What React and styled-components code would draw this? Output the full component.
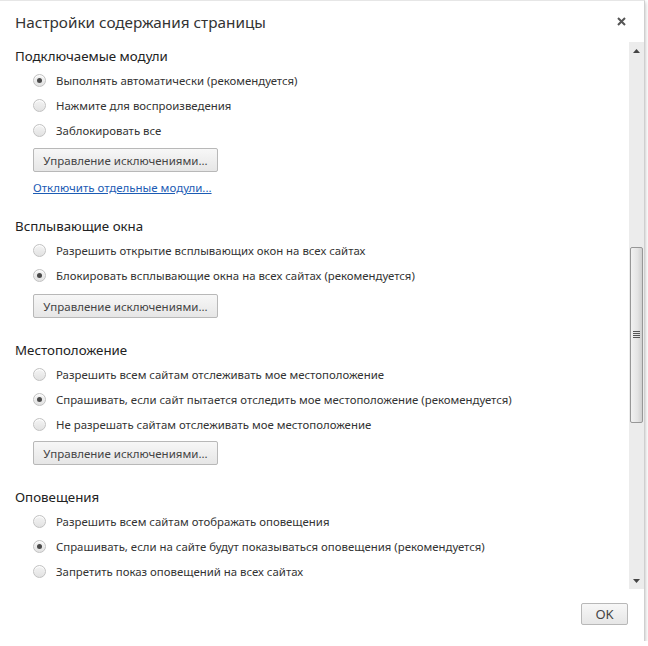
import React from 'react';
import styled, { createGlobalStyle } from 'styled-components';

const GlobalStyle = createGlobalStyle`
  html, body {
    margin: 0;
    padding: 0;
    background: #fff;
  }
  body {
    font-family: "Noto Sans", "Liberation Sans", sans-serif;
    color: #333;
  }
`;

const Dialog = styled.div`
  width: 644px;
  height: 640px;
  background: #fff;
  border-top: 1px solid #e6e6e6;
  border-right: 1px solid #cfcfcf;
  box-shadow: 0 2px 4px rgba(0, 0, 0, 0.3);
  display: flex;
  flex-direction: column;
`;

const Header = styled.div`
  height: 41px;
  display: flex;
  align-items: center;
  justify-content: space-between;
  padding: 0 15px;
`;

const Title = styled.h1`
  margin: 0;
  font-size: 15.3px;
  font-weight: normal;
  color: #333;
`;

const CloseButton = styled.button`
  border: 0;
  background: none;
  padding: 0;
  width: 16px;
  height: 16px;
  display: flex;
  align-items: center;
  justify-content: center;
  cursor: pointer;
`;

const Body = styled.div`
  height: 547px;
  display: flex;
`;

const Content = styled.div`
  flex: 1;
  overflow: hidden;
  padding: 3px 0 0 15px;
`;

const Section = styled.section`
  margin-bottom: ${props => props.gap}px;
`;

const Heading = styled.h2`
  margin: 0;
  height: 23px;
  line-height: 23px;
  font-size: 13.3px;
  font-weight: normal;
  color: #222;
`;

const Options = styled.div`
  padding-left: 18px;
`;

const OptionRow = styled.label`
  height: 25px;
  display: flex;
  align-items: center;
  gap: 10px;
  font-size: 11.4px;
  color: #333;
  white-space: nowrap;
`;

const Radio = styled.span`
  width: 13px;
  height: 13px;
  flex: none;
  box-sizing: border-box;
  border-radius: 50%;
  border: 1px solid #c2c2c2;
  background: linear-gradient(#f4f4f4, #e2e2e2);
  box-shadow: inset 0 1px 1px #fff;
  display: flex;
  align-items: center;
  justify-content: center;

  &::after {
    content: '';
    width: 5px;
    height: 5px;
    border-radius: 50%;
    background: ${props => (props.checked ? '#4a4a4a' : 'transparent')};
  }
`;

const Button = styled.button`
  margin-top: ${props => props.offset}px;
  width: 185px;
  height: 24px;
  padding: 0;
  border: 1px solid #b8b8b8;
  border-radius: 2px;
  background: linear-gradient(#f7f7f7, #e6e6e6);
  font-family: inherit;
  font-size: 11.5px;
  color: #444;
  white-space: nowrap;
  display: block;
`;

const Link = styled.a`
  display: block;
  margin-top: 8px;
  height: 16px;
  line-height: 16px;
  font-size: 11.5px;
  color: #1c5cb4;
  text-decoration: underline;
`;

const Scrollbar = styled.div`
  width: 15px;
  background: #ececec;
  display: flex;
  flex-direction: column;
`;

const Arrow = styled.div`
  height: 17px;
  display: flex;
  align-items: center;
  justify-content: center;
`;

const Track = styled.div`
  flex: ${props => props.size};
`;

const Thumb = styled.div`
  height: 176px;
  box-sizing: border-box;
  margin: 0 1px;
  border: 1px solid #979797;
  border-radius: 2px;
  background: linear-gradient(90deg, #f2f2f2, #e4e4e4 60%, #cfcfcf);
  display: flex;
  align-items: center;
  justify-content: center;
`;

const Footer = styled.div`
  flex: 1;
  display: flex;
  justify-content: flex-end;
  align-items: flex-start;
  padding: 14px 16px 0 0;
`;

const OkButton = styled.button`
  width: 47px;
  height: 22px;
  padding: 0;
  border: 1px solid #b8b8b8;
  border-radius: 2px;
  background: linear-gradient(#f7f7f7, #e6e6e6);
  font-family: inherit;
  font-size: 13px;
  color: #444;
`;

const sections = [
  {
    title: 'Подключаемые модули',
    options: ['Выполнять автоматически (рекомендуется)', 'Нажмите для воспроизведения', 'Заблокировать все'],
    checked: 0,
    buttonOffset: 5,
    link: 'Отключить отдельные модули...',
    gap: 19,
  },
  {
    title: 'Всплывающие окна',
    options: ['Разрешить открытие всплывающих окон на всех сайтах', 'Блокировать всплывающие окна на всех сайтах (рекомендуется)'],
    checked: 1,
    buttonOffset: 6,
    gap: 21,
  },
  {
    title: 'Местоположение',
    options: [
      'Разрешить всем сайтам отслеживать мое местоположение',
      'Спрашивать, если сайт пытается отследить мое местоположение (рекомендуется)',
      'Не разрешать сайтам отслеживать мое местоположение',
    ],
    checked: 1,
    buttonOffset: 4,
    gap: 21,
  },
  {
    title: 'Оповещения',
    options: [
      'Разрешить всем сайтам отображать оповещения',
      'Спрашивать, если на сайте будут показываться оповещения (рекомендуется)',
      'Запретить показ оповещений на всех сайтах',
    ],
    checked: 1,
    gap: 0,
  },
];

const App = () => (
  <>
    <GlobalStyle />
    <Dialog>
      <Header>
        <Title>Настройки содержания страницы</Title>
        <CloseButton>
          <svg width="9" height="9" viewBox="0 0 9 9">
            <path d="M1 1L8 8M8 1L1 8" stroke="#555" strokeWidth="2" />
          </svg>
        </CloseButton>
      </Header>
      <Body>
        <Content>
          {sections.map(section => (
            <Section key={section.title} gap={section.gap}>
              <Heading>{section.title}</Heading>
              <Options>
                {section.options.map((option, index) => (
                  <OptionRow key={option}>
                    <Radio checked={index === section.checked} />
                    {option}
                  </OptionRow>
                ))}
                {section.buttonOffset && (
                  <Button offset={section.buttonOffset}>Управление исключениями...</Button>
                )}
                {section.link && <Link href="#">{section.link}</Link>}
              </Options>
            </Section>
          ))}
        </Content>
        <Scrollbar>
          <Arrow>
            <svg width="7" height="4" viewBox="0 0 7 4">
              <path d="M0 4L3.5 0L7 4Z" fill="#444" />
            </svg>
          </Arrow>
          <Track size={188} />
          <Thumb>
            <svg width="7" height="8" viewBox="0 0 7 8">
              <path d="M0 0.5H7M0 2.5H7M0 4.5H7M0 6.5H7" stroke="#555" strokeWidth="1" />
            </svg>
          </Thumb>
          <Track size={149} />
          <Arrow>
            <svg width="7" height="4" viewBox="0 0 7 4">
              <path d="M0 0L3.5 4L7 0Z" fill="#444" />
            </svg>
          </Arrow>
        </Scrollbar>
      </Body>
      <Footer>
        <OkButton>OK</OkButton>
      </Footer>
    </Dialog>
  </>
);

export default App;
